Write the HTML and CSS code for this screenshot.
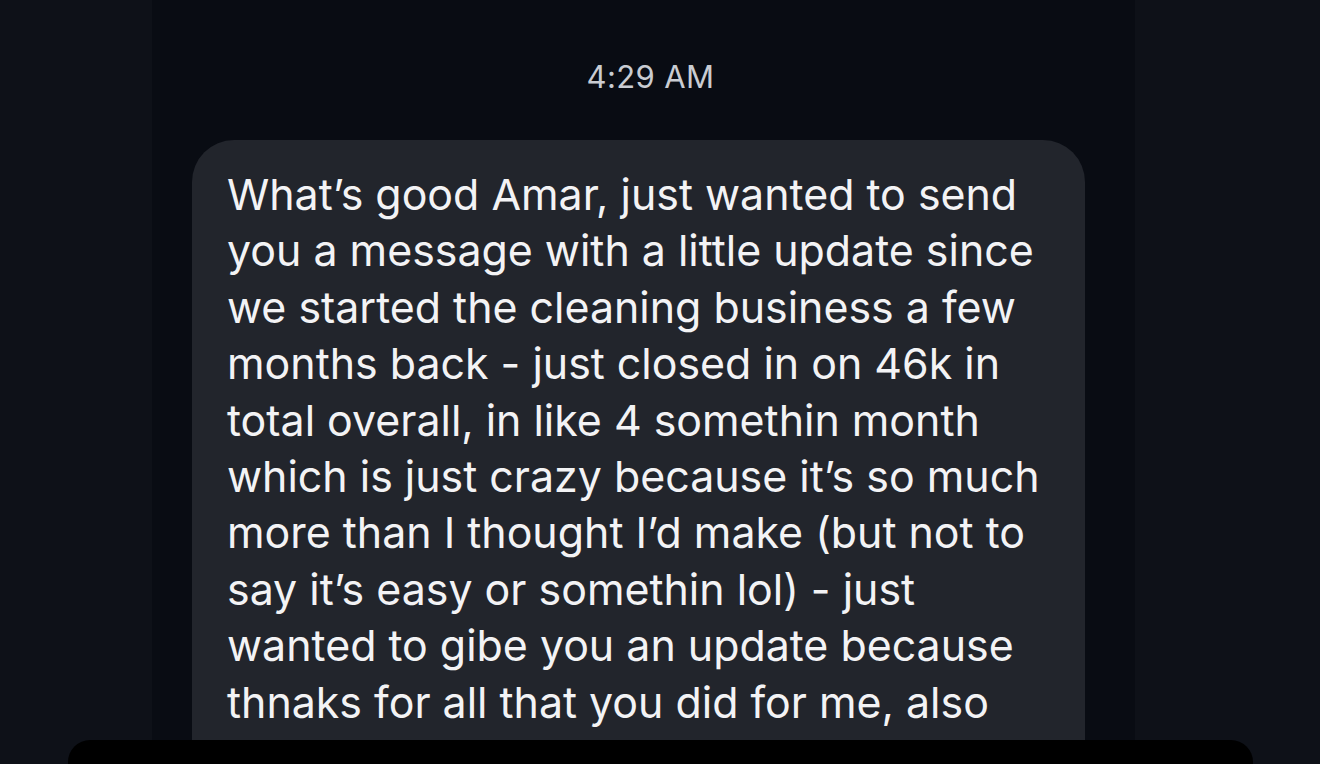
FILE: index.html
```html
<!DOCTYPE html>
<html lang="en">
<head>
<meta charset="utf-8">
<title>Message</title>
<link rel="stylesheet" href="styles.css">
</head>
<body>
<div class="screen">
  <div class="side"></div>
  <main class="thread">
    <div class="time">4:29 AM</div>
    <div class="bubble">
      <p class="msg">What’s good Amar, just wanted to send<br>you a message with a little update since<br>we started the cleaning business a few<br>months back - just closed in on 46k in<br>total overall, in like 4 somethin month<br>which is just crazy because it’s so much<br>more than I thought I’d make (but not to<br>say it’s easy or somethin lol) - just<br>wanted to gibe you an update because<br>thnaks for all that you did for me, also</p>
    </div>
  </main>
  <div class="side"></div>
</div>
<div class="dock"></div>
</body>
</html>
```
FILE: styles.css
```css
html, body {
  margin: 0;
  padding: 0;
  height: 100%;
  overflow: hidden;
  background: #0e1118;
  font-family: Inter, Roboto, "Liberation Sans", sans-serif;
}

.screen {
  display: flex;
  height: 764px;
}

.side {
  flex: 0 0 152px;
  background: #0e1118;
}

.side:last-child {
  flex-basis: 185px;
}

.thread {
  flex: 1;
  background: #090c13;
  padding: 60px 0 0 40px;
}

.time {
  width: 917px;
  text-align: center;
  color: #c9ccd2;
  font-size: 31px;
  line-height: 34px;
  letter-spacing: 0.4px;
}

.bubble {
  margin-top: 46px;
  width: 893px;
  box-sizing: border-box;
  background: #22252c;
  border-radius: 42px 42px 0 0;
  padding: 26px 20px 0 35px;
  height: 624px;
}

.msg {
  margin: 0;
  color: #f3f3f5;
  font-size: 42.9px;
  line-height: 56.4px;
  white-space: nowrap;
}

.dock {
  position: absolute;
  left: 68px;
  right: 67px;
  top: 740px;
  height: 24px;
  background: #000;
  border-radius: 22px 22px 0 0;
}
```
